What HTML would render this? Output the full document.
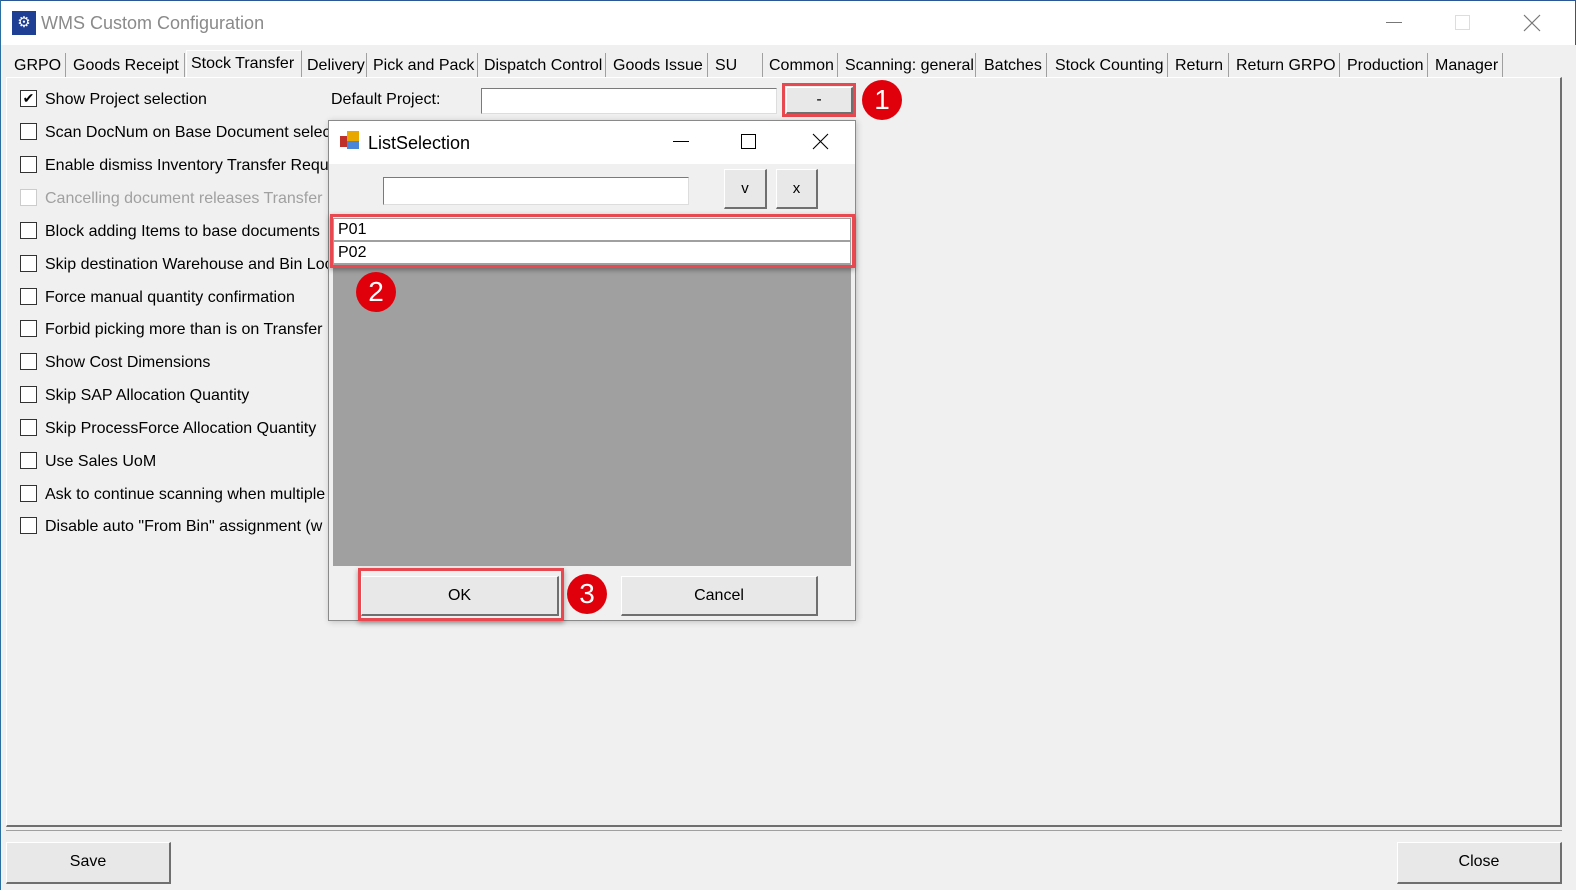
<!DOCTYPE html>
<html><head><meta charset="utf-8"><style>
*{margin:0;padding:0;box-sizing:border-box}
body{width:1576px;height:890px;overflow:hidden;background:#f0f0f0;font-family:"Liberation Sans",sans-serif;font-size:16px;color:#000;position:relative}
.a{position:absolute}
.title{left:0;top:0;width:1576px;height:45px;background:#fff;border:1px solid #2b5797;border-bottom:none}
.tab{position:absolute;top:53px;height:25px;line-height:26px;font-size:16px;padding-left:4px;border-right:1px solid #a0a0a0;white-space:nowrap}
.cb{position:absolute;left:20px;width:17px;height:17px;border:1px solid #333;background:#fff}
.lbl{position:absolute;left:45px;font-size:16px;white-space:nowrap;margin-top:1px}
.btn{position:absolute;background:#e8e8e8;border-right:2px solid #6f6f6f;border-bottom:2px solid #6f6f6f;border-top:1px solid #fff;border-left:1px solid #fff;text-align:center;font-size:16px}
.red{position:absolute;border:3px solid #e8484f;box-shadow:0 2px 5px rgba(0,0,0,.35)}
.circ{position:absolute;width:40px;height:40px;border-radius:50%;background:#e0000b;color:#fff;font-size:28px;text-align:center;line-height:40px}
</style></head><body>
<div class="a title"></div>
<div class="a" style="left:0;top:0;width:1px;height:890px;background:#2b6fa0"></div>
<div class="a" style="left:12px;top:11px;width:24px;height:24px;background:#1f3f94;color:#fff;font-size:15px;line-height:24px;text-align:center">⚙</div>
<div class="a" style="left:41px;top:13px;font-size:18px;color:#8a8a8a">WMS Custom Configuration</div>
<div class="a" style="left:1386px;top:22px;width:16px;height:1px;background:#777"></div>
<div class="a" style="left:1455px;top:15px;width:15px;height:15px;border:1px solid #ddd"></div>
<svg class="a" style="left:1523px;top:14px" width="18" height="18"><path d="M1 1L17 17M17 1L1 17" stroke="#777" stroke-width="1.2"/></svg>

<div class="tab" style="left:10px;width:56px">GRPO</div>
<div class="tab" style="left:69px;width:116px">Goods Receipt</div>
<div class="tab" style="left:186px;width:116px;top:50px;height:28px;background:#f0f0f0;border-left:1px solid #fff;border-top:1px solid #fff;border-right:1px solid #a0a0a0">Stock Transfer</div>
<div class="tab" style="left:303px;width:64px">Delivery</div>
<div class="tab" style="left:369px;width:109px">Pick and Pack</div>
<div class="tab" style="left:480px;width:126px">Dispatch Control</div>
<div class="tab" style="left:609px;width:99px">Goods Issue</div>
<div class="tab" style="left:711px;width:52px">SU</div>
<div class="tab" style="left:765px;width:73px">Common</div>
<div class="tab" style="left:841px;width:135px">Scanning: general</div>
<div class="tab" style="left:980px;width:67px">Batches</div>
<div class="tab" style="left:1051px;width:117px">Stock Counting</div>
<div class="tab" style="left:1171px;width:58px">Return</div>
<div class="tab" style="left:1232px;width:108px">Return GRPO</div>
<div class="tab" style="left:1343px;width:85px">Production</div>
<div class="tab" style="left:1431px;width:72px">Manager</div>

<div class="a" style="left:6px;top:77px;width:1556px;height:750px;border-top:1px solid #fff;border-left:1px solid #fff;border-right:2px solid #6f6f6f;border-bottom:2px solid #6f6f6f"></div>
<div class="a" style="left:6px;top:830px;width:1556px;height:1px;background:#a0a0a0"></div>

<div class="cb" style="top:90px;line-height:14px;font-size:14px;text-align:center">✔</div><div class="lbl" style="top:90px">Show Project selection</div>
<div class="cb" style="top:123px"></div><div class="lbl" style="top:123px">Scan DocNum on Base Document selec</div>
<div class="cb" style="top:156px"></div><div class="lbl" style="top:156px">Enable dismiss Inventory Transfer Requ</div>
<div class="cb" style="top:189px;border-color:#ccc"></div><div class="lbl" style="top:189px;color:#a0a0a0">Cancelling document releases Transfer</div>
<div class="cb" style="top:222px"></div><div class="lbl" style="top:222px">Block adding Items to base documents</div>
<div class="cb" style="top:255px"></div><div class="lbl" style="top:255px">Skip destination Warehouse and Bin Loc</div>
<div class="cb" style="top:288px"></div><div class="lbl" style="top:288px">Force manual quantity confirmation</div>
<div class="cb" style="top:320px"></div><div class="lbl" style="top:320px">Forbid picking more than is on Transfer R</div>
<div class="cb" style="top:353px"></div><div class="lbl" style="top:353px">Show Cost Dimensions</div>
<div class="cb" style="top:386px"></div><div class="lbl" style="top:386px">Skip SAP Allocation Quantity</div>
<div class="cb" style="top:419px"></div><div class="lbl" style="top:419px">Skip ProcessForce Allocation Quantity</div>
<div class="cb" style="top:452px"></div><div class="lbl" style="top:452px">Use Sales UoM</div>
<div class="cb" style="top:485px"></div><div class="lbl" style="top:485px">Ask to continue scanning when multiple</div>
<div class="cb" style="top:517px"></div><div class="lbl" style="top:517px">Disable auto "From Bin" assignment (w</div>

<div class="a" style="left:331px;top:91px">Default Project:</div>
<div class="a" style="left:481px;top:88px;width:296px;height:26px;background:#fff;border:1px solid #7a7a7a;border-right-color:#ddd;border-bottom-color:#ddd"></div>
<div class="btn" style="left:786px;top:87px;width:67px;height:27px;line-height:24px">-</div>
<div class="red" style="left:782px;top:83px;width:74px;height:34px;box-shadow:none"></div>
<div class="circ" style="left:862px;top:80px">1</div>

<div class="a" style="left:328px;top:120px;width:528px;height:501px;border:1px solid #8a8a8a;background:#f0f0f0;box-shadow:1px 1px 6px rgba(0,0,0,.2)"></div>
<div class="a" style="left:329px;top:121px;width:526px;height:43px;background:#fff"></div>
<svg class="a" style="left:340px;top:131px" width="21" height="20"><rect x="0" y="5" width="7" height="11" fill="#c0302a"/><rect x="7" y="0" width="12" height="10" fill="#e8a800"/><rect x="7" y="10" width="12" height="8" fill="#4a86d8"/></svg>
<div class="a" style="left:368px;top:133px;font-size:18px">ListSelection</div>
<div class="a" style="left:673px;top:141px;width:16px;height:1px;background:#000"></div>
<div class="a" style="left:741px;top:134px;width:15px;height:15px;border:1px solid #000"></div>
<svg class="a" style="left:812px;top:133px" width="17" height="17"><path d="M1 1L16 16M16 1L1 16" stroke="#000" stroke-width="1.1"/></svg>
<div class="a" style="left:383px;top:177px;width:306px;height:28px;background:#fff;border:1px solid #7a7a7a;border-right-color:#ddd;border-bottom-color:#ddd"></div>
<div class="btn" style="left:724px;top:169px;width:43px;height:40px;line-height:37px;font-size:15px">v</div>
<div class="btn" style="left:776px;top:169px;width:42px;height:40px;line-height:37px;font-size:15px">x</div>
<div class="a" style="left:333px;top:218px;width:518px;height:348px;background:#a0a0a0"></div>
<div class="a" style="left:334px;top:219px;width:516px;height:22px;background:#fff;border-bottom:1px solid #a0a0a0;padding-left:4px;line-height:22px">P01</div>
<div class="a" style="left:334px;top:242px;width:516px;height:22px;background:#fff;border-bottom:1px solid #a0a0a0;padding-left:4px;line-height:22px">P02</div>
<div class="red" style="left:330px;top:214px;width:525px;height:54px"></div>
<div class="circ" style="left:356px;top:272px">2</div>
<div class="btn" style="left:361px;top:576px;width:198px;height:40px;line-height:37px">OK</div>
<div class="red" style="left:358px;top:568px;width:206px;height:53px"></div>
<div class="circ" style="left:567px;top:574px">3</div>
<div class="btn" style="left:621px;top:576px;width:197px;height:40px;line-height:37px">Cancel</div>

<div class="btn" style="left:6px;top:842px;width:165px;height:42px;line-height:38px">Save</div>
<div class="btn" style="left:1397px;top:842px;width:165px;height:42px;line-height:38px">Close</div>
</body></html>
